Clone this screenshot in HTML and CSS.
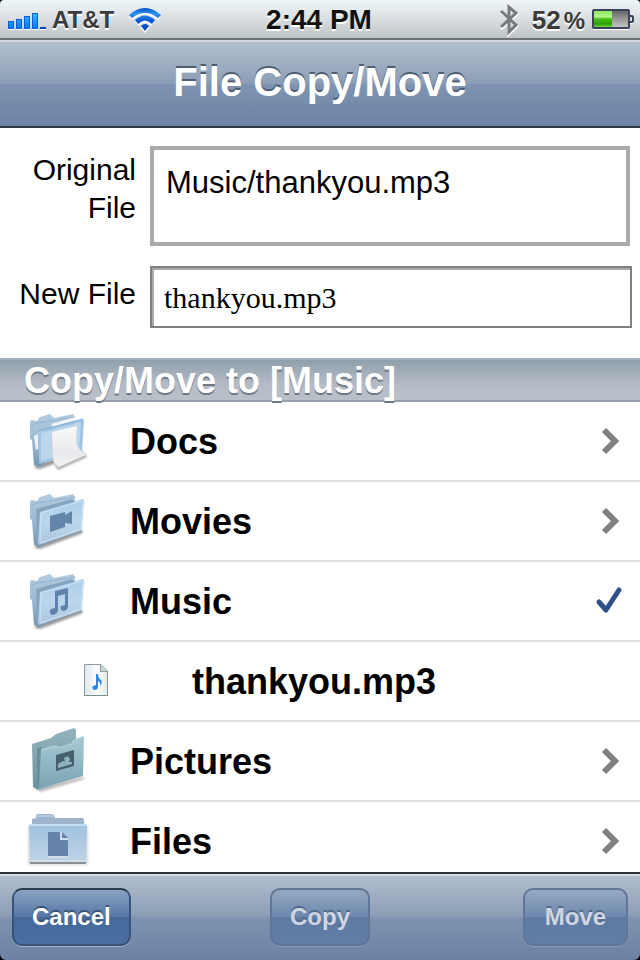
FILE: index.html
```
<!DOCTYPE html>
<html lang="en">
<head>
<meta charset="utf-8">
<meta name="viewport" content="width=device-width, initial-scale=1">
<title>File Copy/Move</title>
<link rel="stylesheet" href="styles.css">
</head>
<body>
<header class="status">
  <div class="status-left">
    <svg class="signal" viewBox="8 0 38 38" aria-hidden="true">
      <defs><linearGradient id="blue" x2="0" y2="1"><stop stop-color="#35b8ff"/><stop offset="1" stop-color="#0878f4"/></linearGradient></defs>
      <path fill="#fff" d="M8 29h6v1H8zM16 29h6v1h-6zM24 29h6v1h-6zM32 29h6v1h-6zM40 29h6v1h-6z"/>
      <path fill="#0a5fd4" d="M8 21h6v8H8zM16 19h6v10h-6zM24 16h6v13h-6zM32 13h6v16h-6z"/>
      <path fill="url(#blue)" d="M9 22h4v6H9zM17 20h4v8h-4zM25 17h4v11h-4zM33 14h4v14h-4z"/>
      <path fill="#0a45b4" d="M40 27h6v2h-6z"/>
    </svg>
    <span class="carrier">AT&amp;T</span>
    <svg class="wifi" viewBox="129 0 34 38" aria-hidden="true">
      <defs><linearGradient id="waves" x2="0" y2="1"><stop stop-color="#0b4bc0"/><stop offset=".25" stop-color="#2f96f5"/><stop offset=".55" stop-color="#0a55d8"/><stop offset="1" stop-color="#0a48bd"/></linearGradient></defs>
      <path fill="#fff" d="M130 17Q146 1 162 17L158 20Q146 9 134 20ZM136 22Q146 12 156 22L152 26Q146 20 140 26ZM141 28Q146 22 151 28L146 33Z"/>
      <path fill="url(#waves)" d="M130 15Q146 1 162 15L159 18Q146 8 133 18ZM136 20Q146 11 156 20L153 24Q146 17 139 24ZM142 26Q146 22 150 26L146 31Z"/>
    </svg>
  </div>
  <time class="clock">2:44 PM</time>
  <div class="status-right">
    <svg class="bluetooth" viewBox="499 0 21 38" aria-hidden="true">
      <path fill="none" stroke="#fff" stroke-width="3" d="M501 12L517 26L509 34V6L517 14L501 29"/>
      <path fill="none" stroke="#777a7c" stroke-width="3" d="M501 11L516 25L509 32V7L516 13L501 27"/>
    </svg>
    <span class="percent">52<span class="sign">%</span></span>
    <svg class="battery" viewBox="591 0 43 38" aria-hidden="true">
      <defs>
        <linearGradient id="charge" x2="0" y2="1"><stop stop-color="#8ee85c"/><stop offset=".35" stop-color="#b5f78a"/><stop offset=".5" stop-color="#45c014"/><stop offset=".8" stop-color="#2b9e07"/><stop offset="1" stop-color="#68d838"/></linearGradient>
        <linearGradient id="empty" x2="0" y2="1"><stop stop-color="#626262"/><stop offset=".45" stop-color="#929292"/><stop offset="1" stop-color="#c9c9c9"/></linearGradient>
      </defs>
      <path fill="#fff" d="M593 29h36v1h-36zM630 23h3v1h-3z"/>
      <path fill="#d9dde2" stroke="#3b425b" stroke-width="2" d="M629 16h3l1 1v4l-1 1h-3z"/>
      <rect x="593" y="10" width="36" height="18" rx="1" fill="url(#empty)" stroke="#3b425b" stroke-width="2"/>
      <path fill="url(#charge)" d="M594 11h18v16h-18z"/>
    </svg>
  </div>
</header>

<div class="titlebar"><h1>File Copy/Move</h1></div>

<main class="content">
  <form class="fields">
    <div class="field">
      <label for="original">Original File</label>
      <textarea id="original" class="original" readonly>Music/thankyou.mp3</textarea>
    </div>
    <div class="field field-new">
      <label for="newfile">New File</label>
      <input id="newfile" class="newfile" type="text" value="thankyou.mp3">
    </div>
  </form>

  <h2 class="section">Copy/Move to [Music]</h2>

  <svg class="defs" width="0" height="0" aria-hidden="true">
    <defs>
      <linearGradient id="front" x2="0" y2="1"><stop stop-color="#a9cdea"/><stop offset=".5" stop-color="#bcd6ec"/><stop offset="1" stop-color="#a9c5de"/></linearGradient>
      <linearGradient id="back" x2="0" y2="1"><stop stop-color="#b3cbdf"/><stop offset=".5" stop-color="#9dbad2"/><stop offset="1" stop-color="#7296b6"/></linearGradient>
      <linearGradient id="paper" x2="0" y2="1"><stop stop-color="#fafafa"/><stop offset=".65" stop-color="#e9e9ed"/><stop offset="1" stop-color="#f4f4f6"/></linearGradient>
      <linearGradient id="tealfront" x2="0" y2="1"><stop stop-color="#a8cbd6"/><stop offset="1" stop-color="#7ba3b2"/></linearGradient>
      <linearGradient id="tealback" x2="0" y2="1"><stop stop-color="#94b3bf"/><stop offset="1" stop-color="#6d929f"/></linearGradient>
      <linearGradient id="flat" x2="0" y2="1"><stop stop-color="#9fc1de"/><stop offset="1" stop-color="#bfd3e6"/></linearGradient>
      <linearGradient id="page" x2="1" y2="0"><stop stop-color="#dce8ea"/><stop offset=".6" stop-color="#fff"/><stop offset="1" stop-color="#dfe9ea"/></linearGradient>
      <filter id="soft" x="-20%" y="-20%" width="140%" height="140%"><feGaussianBlur stdDeviation="1"/></filter>
      <g id="folderback">
        <path fill="#555" opacity=".6" filter="url(#soft)" d="M15 60L62 45L63 48L20 64L15 63Z"/>
        <path fill="url(#back)" d="M10 17L11 15L17 16L20 12L30 9L34 13L53 9L55 12L55 30L20 62L14 60L12 36L10 33Z"/>
        <path fill="none" stroke="#94b4cf" d="M12 20L18 18L55 12"/>
      </g>
      <g id="folder">
        <use href="#folderback"/>
        <path fill="#86a5bf" d="M16 24L52 14L56 18L21 27L20 61L17 59Z"/>
        <path fill="url(#front)" d="M20 27L63 14L64 16L62 45L20 60L18 58Z"/>
        <path fill="none" stroke="#cbe2f4" d="M21 28L63 16L61 44L20 58Z"/>
        <path fill="none" stroke="#7d91a5" d="M18 61L62 46"/>
      </g>
    </defs>
  </svg>

  <ul class="list">
    <li><a class="row" href="#docs">
      <svg class="icon" viewBox="0 -3 100 78" aria-hidden="true">
        <use href="#folderback"/>
        <path fill="#f1f4f7" d="M14 31L18 29V44L16 45ZM31 19L55 12V16L33 22Z"/>
        <path fill="#9fc4e4" d="M18 26L63 14L64 16L62 45L20 59L19 58Z"/>
        <path fill="#bdd6ec" d="M21 28L61 17L59 43L21 56Z"/>
        <path fill="none" stroke="#84adcf" d="M18 26L63 14"/>
        <path fill="#777" opacity=".6" filter="url(#soft)" d="M34 59L65 48L67 52L38 65Z"/>
        <path fill="url(#paper)" d="M32 27L57 21L56 38Q58 44 66 50L39 62Q33 60 33 53Z"/>
        <path fill="none" stroke="#d4d4d8" d="M33 53Q34 60 39 62"/>
      </svg>
      <span class="name">Docs</span>
      <svg class="mark" viewBox="0 0 24 28" aria-hidden="true"><path fill="none" stroke="#808080" stroke-width="6" d="M6 3L17 14L6 25"/></svg>
    </a></li>
    <li><a class="row" href="#movies">
      <svg class="icon" viewBox="0 -3 100 78" aria-hidden="true">
        <use href="#folder"/>
        <path fill="#6485aa" d="M30 31L45 27V30L52 26V39L45 38V42L30 47Z"/>
      </svg>
      <span class="name">Movies</span>
      <svg class="mark" viewBox="0 0 24 28" aria-hidden="true"><path fill="none" stroke="#808080" stroke-width="6" d="M6 3L17 14L6 25"/></svg>
    </a></li>
    <li><a class="row" href="#music" aria-current="true">
      <svg class="icon" viewBox="0 -3 100 78" aria-hidden="true">
        <use href="#folder"/>
        <path fill="#5f83aa" d="M35 26L48 23V42Q47 46 43 46Q39 44 41 41L45 40V29L38 31V46Q36 50 32 50Q28 47 31 44L35 43Z"/>
      </svg>
      <span class="name">Music</span>
      <svg class="mark" viewBox="0 0 24 28" aria-hidden="true"><path fill="none" stroke="#2f5087" stroke-width="5" stroke-linecap="round" stroke-linejoin="round" d="M1 15L8 23L21 3"/></svg>
    </a></li>
    <li><a class="row row-file" href="#thankyou">
      <svg class="icon" viewBox="0 -13 100 78" aria-hidden="true">
        <path fill="url(#page)" stroke="#8e9f9f" d="M64.500 9.500H81L87.500 16V40.500H64.500Z"/>
        <path fill="#cbd5d5" stroke="#8e9f9f" d="M80.500 10V16.500H87"/>
        <path fill="none" stroke="#7c8f8f" d="M64 40.500H88"/>
        <path fill="#2b86ea" d="M76 19H78Q78 23 81 25Q83 28 80 31Q81 27 78 26V32Q78 35 74 35Q71 33 73 31L76 30Z"/>
      </svg>
      <span class="name">thankyou.mp3</span>
    </a></li>
    <li><a class="row" href="#pictures">
      <svg class="icon" viewBox="0 67 100 78" aria-hidden="true">
        <path fill="#777" opacity=".5" filter="url(#soft)" d="M15 133L63 122L65 124L20 137Z"/>
        <path fill="url(#tealback)" d="M12 89L31 83L36 79L54 73L56 75V100L18 135L13 132Z"/>
        <path fill="#6a8f9c" d="M17 93L22 92L21 134L17 132Z"/>
        <path fill="url(#tealfront)" d="M21 94L36 90L38 92L52 88L53 85L63 81L64 83L63 121L19 134Z"/>
        <path fill="none" stroke="#b3d1da" d="M21 95L36 91L38 93L52 89L53 86L63 82"/>
        <path fill="#46616b" d="M36 100L54 95V111L36 116Z"/>
        <path fill="#8cb2c0" d="M38 109L43 106L45 107L44 103L48 101L50 104L49 107L52 107V109L38 113Z"/>
      </svg>
      <span class="name">Pictures</span>
      <svg class="mark" viewBox="0 0 24 28" aria-hidden="true"><path fill="none" stroke="#808080" stroke-width="6" d="M6 3L17 14L6 25"/></svg>
    </a></li>
    <li><a class="row" href="#files">
      <svg class="icon" viewBox="0 2 100 78" aria-hidden="true">
        <path fill="#999" opacity=".35" filter="url(#soft)" d="M8 26H68V65H8Z"/>
        <path fill="#9db4cb" d="M12 19L16 18V15L18 14H32L34 15L35 18H63L64 20V25H12Z"/>
        <path fill="#b7c9da" d="M17 15H33V17H17Z"/>
        <path fill="url(#flat)" d="M9 24H67L66 62H10Z"/>
        <path fill="#c5ddf0" d="M9 24H67V26H9Z"/>
        <path fill="#d0deeb" d="M10 60H66V62H10ZM28 56H48V58H28Z"/>
        <path fill="#8b8f94" d="M10 62H66V64H10Z"/>
        <path fill="#6384a8" d="M28 32H40V40H48V56H28Z"/>
        <path fill="#d0deeb" d="M40 32H42V38H48V40H40Z"/>
        <path fill="#6384a8" d="M42 32L48 38H42Z"/>
      </svg>
      <span class="name">Files</span>
      <svg class="mark" viewBox="0 0 24 28" aria-hidden="true"><path fill="none" stroke="#808080" stroke-width="6" d="M6 3L17 14L6 25"/></svg>
    </a></li>
  </ul>
</main>

<footer class="toolbar">
  <button class="btn" type="button">Cancel</button>
  <button class="btn" type="button" disabled>Copy</button>
  <button class="btn" type="button" disabled>Move</button>
</footer>
</body>
</html>
```
FILE: styles.css
```
* { box-sizing: border-box; }
body {
  margin: 0;
  height: 100vh;
  display: flex;
  flex-direction: column;
  overflow: hidden;
  background: #000;
  color: #000;
  font-family: "Liberation Sans", Arial, sans-serif;
}
svg { display: block; flex: none; }
h1, h2, ul { margin: 0; padding: 0; }
.defs { position: absolute; }

.status {
  flex: none;
  height: 40px;
  display: grid;
  grid-template-columns: 1fr auto 1fr;
  padding: 0 6px 0 8px;
  border-radius: 4px 4px 0 0;
  background: linear-gradient(#eff6fa, #dbe1e4 45%, #bfc4c6);
  border-bottom: 2px solid #6b7575;
  font-weight: bold;
  color: #3b3b3b;
  text-shadow: 0 2px 0 #fff;
}
.status-left, .status-right { display: flex; }
.status-right { justify-content: flex-end; }
.signal { width: 38px; height: 38px; }
.carrier { margin: 0 14px 0 6px; font-size: 24px; line-height: 40px; }
.wifi { width: 34px; height: 38px; }
.clock { margin-right: 4px; font-size: 28px; line-height: 40px; color: #111; }
.bluetooth { width: 21px; height: 38px; margin-right: 12px; }
.percent { font-size: 26px; line-height: 40px; }
.sign { margin-left: 3px; font-size: 24px; }
.battery { width: 43px; height: 38px; margin-left: 6px; }

.titlebar {
  flex: none;
  height: 88px;
  border-top: 2px solid #d2dae0;
  border-bottom: 2px solid #2d3642;
  background: linear-gradient(#b3c0cf, #8b9db6 50%, #7e94b2 50%, #6d83a3);
  text-align: center;
}
h1 {
  font-size: 40px;
  line-height: 80px;
  color: #fff;
  text-shadow: 0 -2px 0 #4e5d72;
}

.content { flex: 1; min-height: 0; overflow: hidden; background: #fff; }
.fields { padding: 18px 8px 30px 16px; font-size: 30px; }
.field { display: flex; margin-right: 2px; }
.field-new { margin: 20px 0 0; }
.field label {
  flex: none;
  width: 120px;
  margin-right: 14px;
  padding-top: 5px;
  line-height: 38px;
  text-align: right;
}
.field-new label { padding-top: 9px; }
.original, .newfile {
  display: block;
  flex: 1;
  min-width: 0;
  margin: 0;
  border-radius: 0;
  background: #fff;
  color: #000;
  outline: none;
}
.original {
  height: 100px;
  padding: 14px 12px;
  border: 4px solid #aaa;
  font: 31px/38px "Liberation Sans", Arial, sans-serif;
  resize: none;
  overflow: hidden;
}
.newfile {
  height: 62px;
  padding: 2px 12px 0;
  border: 2px solid #808080;
  box-shadow: inset 2px 2px 0 #aaa;
  font: 30px "Liberation Serif", "Times New Roman", serif;
}

.section {
  height: 44px;
  padding-left: 24px;
  border-top: 2px solid #a5b1ba;
  border-bottom: 2px solid #989faa;
  background: linear-gradient(#90a0ab, #b3bac6 60%, #b8c1c8);
  font-size: 36px;
  line-height: 42px;
  color: #fff;
  text-shadow: 0 2px 0 #6f7983;
}

.list { list-style: none; }
.row {
  display: flex;
  align-items: center;
  height: 80px;
  padding: 0 18px 0 20px;
  border-bottom: 2px solid #e0e0e0;
  color: #000;
  text-decoration: none;
  font-size: 36px;
  font-weight: bold;
}
.icon { width: 100px; height: 78px; margin-right: 10px; }
.row-file .icon { margin-right: 72px; }
.name { flex: 1; padding-top: 2px; line-height: 76px; }
.mark { width: 24px; height: 28px; overflow: visible; }

.toolbar {
  flex: none;
  height: 88px;
  display: grid;
  grid-template-columns: 1fr auto 1fr;
  align-items: start;
  padding: 14px 12px 0;
  border-top: 2px solid #2d3037;
  border-radius: 0 0 6px 6px;
  background: linear-gradient(#d5dde2 0 2px, #b1becd 2px, #8a9cb5 50%, #7e93b0 50%, #6c82a3);
}
.btn {
  height: 58px;
  padding: 0 18px;
  border: 2px solid #385379;
  border-top-color: #2d3b4f;
  border-radius: 10px;
  background: linear-gradient(#8ba2c1, #5477a7 50%, #466a9b 50%, #4a6d9f);
  box-shadow: 0 1px 0 #a4b3c8;
  font: bold 24px "Liberation Sans", Arial, sans-serif;
  color: #fff;
  text-shadow: 0 -2px 0 #3b5273;
}
.btn:first-child { justify-self: start; }
.btn:last-child { justify-self: end; padding: 0 20px; }
.btn:disabled {
  border-color: #607696;
  background: linear-gradient(#96a9c1, #6c87ae 50%, #5f7ba4 50%, #607da5);
  box-shadow: 0 1px 0 #8c9db7;
  color: #cfd6e2;
  text-shadow: 0 -2px 0 #526988;
}
```
